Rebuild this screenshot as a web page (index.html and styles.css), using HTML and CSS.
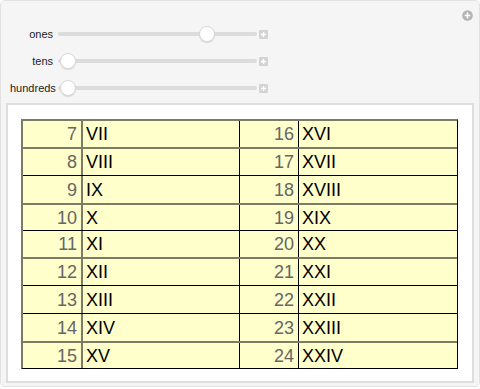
FILE: index.html
```html
<!DOCTYPE html>
<html>
<head>
<meta charset="utf-8">
<link rel="stylesheet" href="styles.css">
</head>
<body>
<div class="panel">
  <div class="controls">
    <div class="ctl-row">
      <span class="label">ones</span>
      <div class="track"><div class="thumb" style="left: 141px"></div></div>
      <span class="plus-btn"><svg width="9" height="9" viewBox="0 0 9 9"><rect width="9" height="9" rx="1" fill="#d4d4d4"/><path d="M4.5 2v5M2 4.5h5" stroke="#fff" stroke-width="1.4"/></svg></span>
    </div>
    <div class="ctl-row">
      <span class="label">tens</span>
      <div class="track"><div class="thumb" style="left: 2px"></div></div>
      <span class="plus-btn"><svg width="9" height="9" viewBox="0 0 9 9"><rect width="9" height="9" rx="1" fill="#d4d4d4"/><path d="M4.5 2v5M2 4.5h5" stroke="#fff" stroke-width="1.4"/></svg></span>
    </div>
    <div class="ctl-row">
      <span class="label">hundreds</span>
      <div class="track"><div class="thumb" style="left: 2px"></div></div>
      <span class="plus-btn"><svg width="9" height="9" viewBox="0 0 9 9"><rect width="9" height="9" rx="1" fill="#d4d4d4"/><path d="M4.5 2v5M2 4.5h5" stroke="#fff" stroke-width="1.4"/></svg></span>
    </div>
    <svg class="corner-plus" width="11" height="11" viewBox="0 0 11 11"><circle cx="5.5" cy="5.5" r="5.3" fill="#b4b4b4"/><path d="M5.5 2.6v5.8M2.6 5.5h5.8" stroke="#fff" stroke-width="1.6"/></svg>
  </div>
  <div class="output">
    <div class="grid">
      <div class="row r1"><div class="num">7</div><div class="rom">VII</div><div class="num">16</div><div class="rom">XVI</div></div>
      <div class="row r2 gray"><div class="num">8</div><div class="rom">VIII</div><div class="num">17</div><div class="rom">XVII</div></div>
      <div class="row r3 black"><div class="num">9</div><div class="rom">IX</div><div class="num">18</div><div class="rom">XVIII</div></div>
      <div class="row r4 gray"><div class="num">10</div><div class="rom">X</div><div class="num">19</div><div class="rom">XIX</div></div>
      <div class="row r5 black"><div class="num">11</div><div class="rom">XI</div><div class="num">20</div><div class="rom">XX</div></div>
      <div class="row r6 gray"><div class="num">12</div><div class="rom">XII</div><div class="num">21</div><div class="rom">XXI</div></div>
      <div class="row r7 black"><div class="num">13</div><div class="rom">XIII</div><div class="num">22</div><div class="rom">XXII</div></div>
      <div class="row r8 black"><div class="num">14</div><div class="rom">XIV</div><div class="num">23</div><div class="rom">XXIII</div></div>
      <div class="row r9 gray"><div class="num">15</div><div class="rom">XV</div><div class="num">24</div><div class="rom">XXIV</div></div>
    </div>
  </div>
</div>
</body>
</html>
```

FILE: styles.css
```css
* { box-sizing: border-box; }
html, body { margin: 0; padding: 0; background: #ffffff; }
body { width: 480px; height: 389px; font-family: "Liberation Sans", Arial, sans-serif; }

.panel {
  width: 480px;
  height: 387px;
  border: 1px solid #e2e2e2;
  border-radius: 5px;
  background: #f5f5f5;
  padding: 0 5px 4px 5px;
  position: relative;
}

.controls {
  height: 102px;
  padding-top: 23px;
  padding-left: 4px;
  display: flex;
  flex-direction: column;
  gap: 8px;
}

.ctl-row {
  display: flex;
  align-items: center;
  height: 19px;
}

.label {
  width: 47px;
  text-align: right;
  font-size: 11px;
  color: #222;
  padding-right: 4px;
}

.track {
  position: relative;
  width: 199px;
  height: 4px;
  border-radius: 2px;
  background: #dcdcdc;
  margin-left: 1px;
}

.thumb {
  position: absolute;
  top: -6px;
  width: 16px;
  height: 16px;
  border-radius: 50%;
  background: #ffffff;
  border: 1px solid #d8d8d8;
  box-shadow: 0 1px 1px rgba(0,0,0,0.12);
}

.plus-btn {
  margin-left: 2px;
  display: flex;
  margin-top: 2px;
}

.corner-plus {
  position: absolute;
  top: 9px;
  right: 6px;
}

.output {
  height: 280px;
  background: #ffffff;
  border: 2px solid #dedede;
  padding: 14px 13px 0 13px;
}

.grid {
  width: 437px;
  border-left: 2px solid #7b7b66;
  border-top: 2px solid #7b7b66;
  border-right: 1px solid #000;
  border-bottom: 1px solid #000;
  background: #ffffcc;
}

.row {
  display: flex;
  height: 28px;
  font-size: 18px;
  line-height: 1;
}
.row.gray { border-top: 2px solid #7b7b66; }
.row.black { border-top: 1px solid #000; }
.r1 { height: 26px; }
.r4, .r5, .r9 { height: 27px; }

.row > div {
  display: flex;
  align-items: center;
}
.num {
  justify-content: flex-end;
  color: #666;
  padding-right: 4px;
}
.rom {
  color: #000;
  padding-left: 3px;
}
.row > div:nth-child(1) { width: 60px; border-right: 2px solid #7b7b66; }
.row > div:nth-child(2) { width: 157px; border-right: 1px solid #000; }
.row > div:nth-child(3) { width: 59px; border-right: 1px solid #000; }
.row > div:nth-child(4) { flex: 1; }
```
